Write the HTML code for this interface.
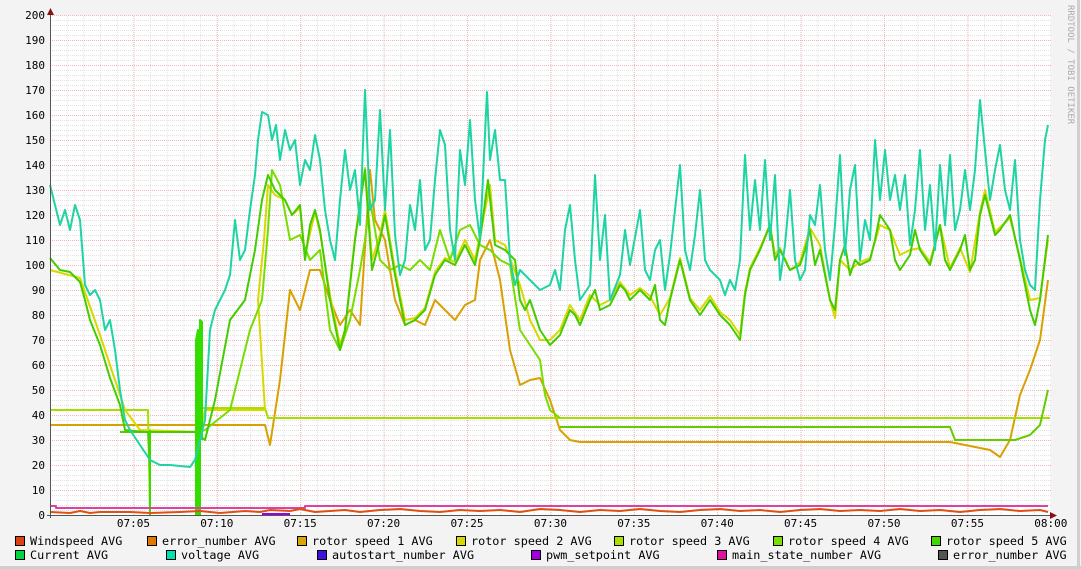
<!DOCTYPE html>
<html><head><meta charset="utf-8"><style>
html,body{margin:0;padding:0;background:#f3f3f3;}
svg{display:block}
text{font-family:"DejaVu Sans Mono","Liberation Mono",monospace;}
</style></head><body>
<svg width="1081" height="569" viewBox="0 0 1081 569" xmlns="http://www.w3.org/2000/svg">
<defs>
<pattern id="hmin" x="0" y="15" width="10" height="5" patternUnits="userSpaceOnUse"><line x1="0" y1="0.5" x2="10" y2="0.5" stroke="#e2e2e2" stroke-dasharray="1,1"/></pattern>
<pattern id="vmin" x="50" y="0" width="16.68" height="10" patternUnits="userSpaceOnUse"><line x1="0.5" y1="0" x2="0.5" y2="10" stroke="#e2e2e2" stroke-dasharray="1,1"/></pattern>
<pattern id="hmaj" x="0" y="15" width="10" height="25" patternUnits="userSpaceOnUse"><line x1="0" y1="0.5" x2="10" y2="0.5" stroke="#f0b4b4" stroke-dasharray="1,1"/></pattern>
<pattern id="vmaj" x="50" y="0" width="83.4" height="10" patternUnits="userSpaceOnUse"><line x1="0.5" y1="0" x2="0.5" y2="10" stroke="#f0b4b4" stroke-dasharray="1,1"/></pattern>
</defs>
<rect x="0" y="0" width="1081" height="569" fill="#f3f3f3"/>
<line x1="1078.5" y1="0" x2="1078.5" y2="569" stroke="#cfcfcf" stroke-width="3"/>
<line x1="0" y1="567.5" x2="1081" y2="567.5" stroke="#cfcfcf" stroke-width="3"/>
<rect x="50" y="15" width="1001" height="500" fill="#fff"/>
<rect x="50" y="15" width="1001" height="500" fill="url(#hmin)"/>
<rect x="50" y="15" width="1001" height="500" fill="url(#vmin)"/>
<rect x="50" y="15" width="1001" height="500" fill="url(#hmaj)"/>
<rect x="50" y="15" width="1001" height="500" fill="url(#vmaj)"/>

<g fill="none" stroke-width="2" stroke-linejoin="round">
<polyline stroke="#d8a000" points="50,425 265,425 270,445 280,380 290,290 300,310 310,270 320,270 330,300 340,325 350,310 360,325 370,170 375,220 385,240 395,300 405,325 415,320 425,325 435,300 445,310 455,320 465,305 475,300 480,260 490,240 500,280 510,350 520,385 530,380 540,378 550,400 560,430 570,440 580,442 950,442 990,450 1000,457 1010,440 1020,395 1030,370 1040,340 1048,280"/>
<polyline stroke="#a8dd00" points="50,410 148,410 150,515"/>
<polyline stroke="#a8dd00" points="200,408 265,408 268,418 1050,418"/>
<polyline stroke="#66cc00" points="560,427 950,427 955,440 1015,440 1030,435 1040,425 1048,390"/>
<polyline stroke="#55cc00" points="120,432 148,432 150,470"/>
<polyline stroke="#d8d800" points="50,270 80,278 100,335 115,380 125,410 140,430 200,432 205,410 265,410 258,300 264,240 268,185 275,195 285,200 292,215 300,208 305,255 315,212 320,232 330,295 340,345 345,330 355,238 365,168 372,260 380,235 385,210 395,270 405,320 415,318 425,308 435,272 445,258 455,262 465,240 475,260 480,235 490,185 495,240 505,245 520,285 530,320 540,340 550,340 560,330 570,305 580,320 590,295 600,305 610,300 620,282 630,295 640,288 650,296 660,315 670,298 680,258 690,298 700,310 710,296 720,312 730,320 740,335 745,292 750,268 760,248 770,225 775,255 780,248 790,270 800,262 810,228 820,245 830,300 835,318 840,260 850,270 860,262 870,258 880,225 890,230 900,255 910,250 920,248 930,262 940,225 950,268 960,248 970,272 980,212 985,190 995,232 1010,218 1020,258 1030,300 1040,298 1048,240"/>
<polyline stroke="#77dd00" points="200,432 205,430 230,410 250,330 262,300 268,230 272,170 280,185 290,240 300,235 310,260 320,250 330,330 340,350 350,320 360,270 365,240 370,200 380,260 390,270 400,265 410,270 420,260 430,270 440,230 450,260 460,230 470,225 480,245 490,250 500,260 510,265 520,330 530,345 540,360 545,395 550,410 560,418"/>
<polyline stroke="#44cc00" points="50,258 60,270 70,272 80,282 85,300 90,320 100,345 110,378 120,405 125,430 145,432 150,432 195,432 205,440 215,400 230,320 245,300 255,250 262,200 268,175 275,190 285,200 292,215 300,205 305,260 310,225 315,210 320,230 330,300 340,350 345,330 355,240 365,170 372,270 380,240 385,215 395,275 405,325 415,320 425,310 435,275 445,260 455,265 465,245 475,265 480,240 488,180 495,245 505,250 515,260 520,300 525,310 530,300 540,330 550,345 560,335 570,310 575,315 580,325 590,300 595,290 600,310 610,305 620,285 625,290 630,300 640,290 650,300 655,285 660,320 665,325 670,300 680,260 690,300 700,315 710,300 720,315 730,325 740,340 745,295 750,270 760,250 770,225 775,260 780,250 790,270 800,265 805,250 810,230 815,265 820,250 830,300 835,310 840,260 845,245 850,275 855,260 860,265 870,260 875,240 880,215 890,230 895,260 900,270 910,255 915,230 920,250 930,265 940,225 945,260 950,270 955,260 960,250 965,235 970,270 975,260 980,215 985,195 990,215 995,235 1000,230 1010,215 1020,260 1030,310 1035,325 1040,300 1048,235"/>
<polyline stroke="#33dd00" points="150,515 150,430"/>
<polyline stroke="#33dd00" points="196,515 196,340 198,330 198,515"/>
<polyline stroke="#33dd00" points="200,515 200,320 202,322 202,440"/>
<polyline stroke="#1ed4a4" points="50,185 55,205 60,225 65,210 70,230 75,205 80,220 85,285 90,295 95,290 100,300 105,330 110,320 115,350 120,390 125,420 130,430 140,445 150,460 160,465 170,465 190,467 195,460 200,440 205,420 210,330 215,310 220,300 225,290 230,275 235,220 240,260 245,250 250,210 255,175 258,140 262,112 268,115 272,140 276,125 280,160 285,130 290,150 295,140 300,185 305,160 310,170 315,135 320,160 325,210 330,240 335,260 340,200 345,150 350,190 355,170 360,225 365,90 370,210 375,200 380,110 385,210 390,130 395,235 400,275 405,260 410,205 415,230 420,180 425,250 430,240 435,180 440,130 445,145 450,230 455,260 460,150 465,185 470,120 475,200 480,240 487,92 490,160 495,130 500,180 505,180 510,260 515,285 520,270 530,280 540,290 550,285 555,270 560,290 565,230 570,205 575,260 580,300 590,285 595,175 600,260 605,215 610,300 620,275 625,230 630,265 640,210 645,270 650,280 655,250 660,240 665,290 670,255 680,165 685,250 690,270 695,235 700,190 705,260 710,270 720,280 725,295 730,280 735,290 740,260 745,155 750,230 755,180 760,230 765,160 770,240 775,175 780,280 785,245 790,190 795,260 800,280 805,270 810,215 815,225 820,185 825,250 830,280 835,225 840,155 845,255 850,190 855,165 860,260 865,220 870,240 875,140 880,200 885,150 890,200 895,175 900,210 905,175 910,245 915,210 920,150 925,230 930,185 935,250 940,165 945,225 950,155 955,230 960,210 965,170 970,210 975,170 980,100 985,150 990,200 995,170 1000,145 1005,190 1010,210 1015,160 1020,240 1025,270 1030,285 1035,290 1040,200 1045,140 1048,125"/>
<polyline stroke="#e040a0" points="50,506 56,506 56,508 305,508 305,506 1048,506"/>
<polyline stroke="#e05010" points="50,512 70,513 80,511 90,513 100,512 130,512 150,513 180,512 200,511 220,513 245,511 260,512 270,510 290,511 300,509 315,512 330,511 345,510 360,512 380,510 400,509 420,511 440,512 460,510 480,511 500,510 520,512 540,509 560,510 580,512 600,510 620,511 640,509 660,511 680,512 700,510 720,509 740,511 760,510 780,512 800,510 820,509 840,511 860,510 880,511 900,509 920,511 940,510 960,512 980,510 1000,509 1020,511 1040,510 1048,512"/>
<polyline stroke="#a000e0" points="262,514 290,514"/>
</g>

<line x1="50.5" y1="10" x2="50.5" y2="518" stroke="#555" stroke-width="1"/>
<line x1="47" y1="515.5" x2="1055" y2="515.5" stroke="#555" stroke-width="1"/>
<polygon points="47,15 54,15 50.5,8" fill="#8b1010"/>
<polygon points="1050,512 1050,519 1057,515.5" fill="#8b1010"/>

<g font-size="11" fill="#000" text-anchor="end">
<text x="45" y="19">200</text><text x="45" y="44">190</text><text x="45" y="69">180</text><text x="45" y="94">170</text><text x="45" y="119">160</text><text x="45" y="144">150</text><text x="45" y="169">140</text><text x="45" y="194">130</text><text x="45" y="219">120</text><text x="45" y="244">110</text><text x="45" y="269">100</text><text x="45" y="294">90</text><text x="45" y="319">80</text><text x="45" y="344">70</text><text x="45" y="369">60</text><text x="45" y="394">50</text><text x="45" y="419">40</text><text x="45" y="444">30</text><text x="45" y="469">20</text><text x="45" y="494">10</text><text x="45" y="519">0</text>
</g>
<g font-size="11" fill="#000" text-anchor="middle">
<text x="133.4" y="527">07:05</text><text x="216.8" y="527">07:10</text><text x="300.2" y="527">07:15</text><text x="383.6" y="527">07:20</text><text x="467" y="527">07:25</text><text x="550.4" y="527">07:30</text><text x="633.8" y="527">07:35</text><text x="717.2" y="527">07:40</text><text x="800.6" y="527">07:45</text><text x="884" y="527">07:50</text><text x="967.4" y="527">07:55</text><text x="1050.8" y="527">08:00</text>
</g>
<text x="1068" y="5" font-size="9" fill="#aaa" transform="rotate(90 1068 5)">RRDTOOL / TOBI OETIKER</text>

<g stroke="#000" stroke-width="1">
<rect x="15.5" y="536.5" width="9" height="9" fill="#e04010"/>
<rect x="147.5" y="536.5" width="9" height="9" fill="#e07800"/>
<rect x="297.5" y="536.5" width="9" height="9" fill="#d8a800"/>
<rect x="456.5" y="536.5" width="9" height="9" fill="#d8d800"/>
<rect x="614.5" y="536.5" width="9" height="9" fill="#a8e000"/>
<rect x="773.5" y="536.5" width="9" height="9" fill="#77e000"/>
<rect x="931.5" y="536.5" width="9" height="9" fill="#44d800"/>
<rect x="15.5" y="550.5" width="9" height="9" fill="#00d840"/>
<rect x="166.5" y="550.5" width="9" height="9" fill="#00e0b0"/>
<rect x="317.5" y="550.5" width="9" height="9" fill="#4010e0"/>
<rect x="531.5" y="550.5" width="9" height="9" fill="#a000e0"/>
<rect x="717.5" y="550.5" width="9" height="9" fill="#e010a0"/>
<rect x="938.5" y="550.5" width="9" height="9" fill="#555"/>
</g>
<g font-size="11.8" fill="#000">
<text x="30" y="545">Windspeed AVG</text>
<text x="162" y="545">error_number AVG</text>
<text x="312" y="545">rotor speed 1 AVG</text>
<text x="471" y="545">rotor speed 2 AVG</text>
<text x="629" y="545">rotor speed 3 AVG</text>
<text x="788" y="545">rotor speed 4 AVG</text>
<text x="946" y="545">rotor speed 5 AVG</text>
<text x="30" y="559">Current AVG</text>
<text x="181" y="559">voltage AVG</text>
<text x="332" y="559">autostart_number AVG</text>
<text x="546" y="559">pwm_setpoint AVG</text>
<text x="732" y="559">main_state_number AVG</text>
<text x="953" y="559">error_number AVG</text>
</g>
</svg>
</body></html>
